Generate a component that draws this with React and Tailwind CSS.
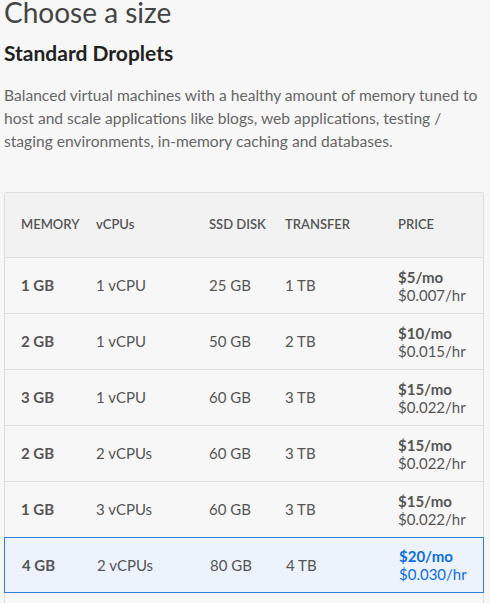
const rows = [
  { mem: "1 GB", cpu: "1 vCPU", disk: "25 GB", transfer: "1 TB", mo: "$5", hr: "$0.007" },
  { mem: "2 GB", cpu: "1 vCPU", disk: "50 GB", transfer: "2 TB", mo: "$10", hr: "$0.015" },
  { mem: "3 GB", cpu: "1 vCPU", disk: "60 GB", transfer: "3 TB", mo: "$15", hr: "$0.022" },
  { mem: "2 GB", cpu: "2 vCPUs", disk: "60 GB", transfer: "3 TB", mo: "$15", hr: "$0.022" },
  { mem: "1 GB", cpu: "3 vCPUs", disk: "60 GB", transfer: "3 TB", mo: "$15", hr: "$0.022" },
  { mem: "4 GB", cpu: "2 vCPUs", disk: "80 GB", transfer: "4 TB", mo: "$20", hr: "$0.030", selected: true },
];

const cols = "grid grid-cols-[75px_113px_76px_113px_1fr] items-center pl-4";

export default function App() {
  return (
    <div className="h-[603px] overflow-hidden bg-[#f7f7f7] px-1 font-['Lato',sans-serif] text-[#555]">
      <h1 className="text-[28px] leading-[25px] text-[#444]">Choose a size</h1>
      <h2 className="mt-[16px] text-[21px] font-bold leading-[24px] text-[#222]">Standard Droplets</h2>
      <p className="mt-[19px] text-[15.6px] leading-[23px] text-[#666]">
        Balanced virtual machines with a healthy amount of memory tuned to host and scale
        applications like blogs, web applications, testing / staging environments, in-memory
        caching and databases.
      </p>

      <div className="mt-[39px] mr-[2px] rounded-t-[3px] border-x border-t border-[#dcdcdc]">
        <div className={`${cols} h-[64px] bg-[#f2f2f2] text-[13px] font-semibold text-[#555]`}>
          <span>MEMORY</span>
          <span>vCPUs</span>
          <span>SSD DISK</span>
          <span>TRANSFER</span>
          <span>PRICE</span>
        </div>
        {rows.map((r, i) => (
          <div
            key={i}
            className={`${cols} h-[56px] text-[15px] ${
              r.selected
                ? "-mx-px border border-[#2f7fd8] bg-[#edf3fc] pl-[17px]"
                : "border-t border-[#dcdcdc]"
            }`}
          >
            <span className="font-bold">{r.mem}</span>
            <span>{r.cpu}</span>
            <span>{r.disk}</span>
            <span>{r.transfer}</span>
            <div className={`leading-[18px] ${r.selected ? "text-[#0b6ee0]" : ""}`}>
              <div className="font-bold">{r.mo}/mo</div>
              <div>{r.hr}/hr</div>
            </div>
          </div>
        ))}
        <div className="h-[20px]" />
      </div>
    </div>
  );
}
